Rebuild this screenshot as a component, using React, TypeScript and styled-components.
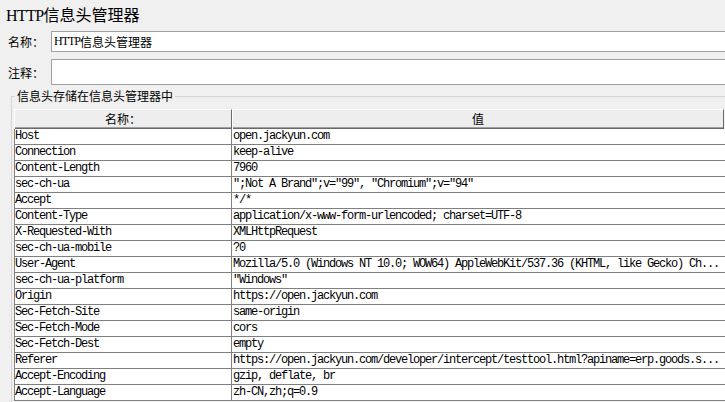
import React from "react";
import styled, { createGlobalStyle } from "styled-components";

const Global = createGlobalStyle`
  html, body { margin: 0; padding: 0; background: #f0f0f0; }
`;

const Page = styled.div`
  width: 725px;
  height: 402px;
  overflow: hidden;
  background: #f0f0f0;
  color: #000;
  font-family: "Noto Sans CJK SC", sans-serif;
  display: flex;
  flex-direction: column;
`;

const Title = styled.h1`
  margin: 0;
  flex: none;
  height: 31px;
  box-sizing: border-box;
  padding: 5px 0 0 6px;
  font-size: 16px;
  line-height: 18px;
  font-weight: normal;
  white-space: nowrap;
`;

const Latin = styled.span<{ $size: number; $spacing: number }>`
  font-family: "Liberation Serif", serif;
  font-size: ${(p) => p.$size}px;
  letter-spacing: ${(p) => p.$spacing}px;
`;

const FieldRow = styled.div<{ $h: number; $mt: number }>`
  display: flex;
  align-items: stretch;
  height: ${(p) => p.$h}px;
  margin-top: ${(p) => p.$mt}px;
  flex: none;
`;

const Label = styled.label`
  width: 51px;
  flex: none;
  box-sizing: border-box;
  padding-left: 8px;
  font-size: 12px;
  display: flex;
  align-items: center;
  white-space: nowrap;
`;

const TextBox = styled.div`
  flex: 1;
  background: #fff;
  border: 1px solid #a0a0a0;
  border-right: none;
  display: flex;
  align-items: center;
  padding-left: 2px;
  font-size: 12px;
  white-space: nowrap;
`;

const Group = styled.fieldset`
  margin: 5px 0 0 11px;
  padding: 7px 0 30px 2px;
  border: 1px solid #d5d5d5;
  border-right: none;
  min-width: 0;
  flex: none;
`;

const Legend = styled.legend`
  padding: 0 2px;
  margin-left: 1px;
  font-size: 12px;
  line-height: 12px;
  white-space: nowrap;
`;

const Table = styled.div`
  width: 711px;
`;

const HeaderRow = styled.div`
  display: grid;
  grid-template-columns: 218px 492px;
  height: 20px;
`;

const HeaderCell = styled.div`
  box-sizing: border-box;
  background: #eeeeee;
  border-top: 1px solid #ffffff;
  border-left: 1px solid #ffffff;
  border-right: 1px solid #696969;
  box-shadow: inset 0 -1px 0 #696969, inset 0 -2px 0 #a0a0a0;
  font-size: 12px;
  line-height: 17px;
  text-align: center;
  white-space: nowrap;
`;

const BodyRow = styled.div`
  display: grid;
  grid-template-columns: 218px 1fr;
  height: 16px;
`;

const Cell = styled.div<{ $first?: boolean }>`
  box-sizing: border-box;
  background: #fff;
  border-bottom: 1px solid #808080;
  border-left: ${(p) => (p.$first ? "1px solid #808080" : "none")};
  border-right: ${(p) => (p.$first ? "1px solid #808080" : "none")};
  padding-left: ${(p) => (p.$first ? 0 : 1)}px;
  font-family: "Liberation Mono", "Noto Sans CJK SC", monospace;
  font-size: 12px;
  letter-spacing: -1.2px;
  line-height: 15px;
  white-space: nowrap;
  overflow: hidden;
`;

const headers: [string, string][] = [
  ["Host", "open.jackyun.com"],
  ["Connection", "keep-alive"],
  ["Content-Length", "7960"],
  ["sec-ch-ua", '";Not A Brand";v="99", "Chromium";v="94"'],
  ["Accept", "*/*"],
  ["Content-Type", "application/x-www-form-urlencoded; charset=UTF-8"],
  ["X-Requested-With", "XMLHttpRequest"],
  ["sec-ch-ua-mobile", "?0"],
  [
    "User-Agent",
    "Mozilla/5.0 (Windows NT 10.0; WOW64) AppleWebKit/537.36 (KHTML, like Gecko) Ch...",
  ],
  ["sec-ch-ua-platform", '"Windows"'],
  ["Origin", "https://open.jackyun.com"],
  ["Sec-Fetch-Site", "same-origin"],
  ["Sec-Fetch-Mode", "cors"],
  ["Sec-Fetch-Dest", "empty"],
  [
    "Referer",
    "https://open.jackyun.com/developer/intercept/testtool.html?apiname=erp.goods.s...",
  ],
  ["Accept-Encoding", "gzip, deflate, br"],
  ["Accept-Language", "zh-CN,zh;q=0.9"],
];

export default function App() {
  return (
    <Page>
      <Global />
      <Title>
        <Latin $size={16} $spacing={-0.6}>HTTP</Latin>信息头管理器
      </Title>
      <FieldRow $h={21} $mt={0}>
        <Label>名称：</Label>
        <TextBox>
          <Latin $size={12} $spacing={-1}>HTTP</Latin>信息头管理器
        </TextBox>
      </FieldRow>
      <FieldRow $h={26} $mt={7}>
        <Label>注释：</Label>
        <TextBox />
      </FieldRow>
      <Group>
        <Legend>信息头存储在信息头管理器中</Legend>
        <Table>
          <HeaderRow>
            <HeaderCell>名称：</HeaderCell>
            <HeaderCell>值</HeaderCell>
          </HeaderRow>
          {headers.map(([name, value]) => (
            <BodyRow key={name}>
              <Cell $first>{name}</Cell>
              <Cell>{value}</Cell>
            </BodyRow>
          ))}
        </Table>
      </Group>
    </Page>
  );
}
